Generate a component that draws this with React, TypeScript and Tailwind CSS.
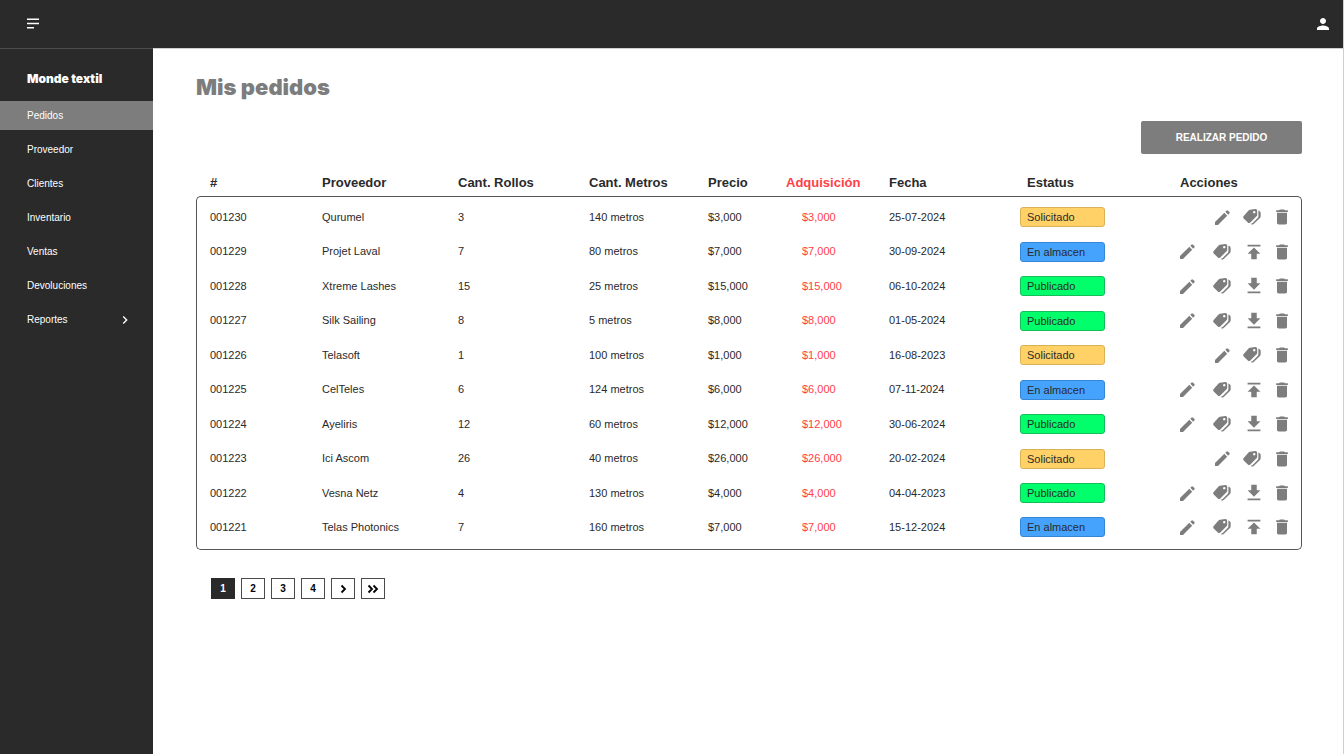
import React from "react";
import { MdChevronRight, MdDelete, MdGetApp, MdPerson, MdPublish } from "react-icons/md";

type Status = "Solicitado" | "En almacen" | "Publicado";

interface Order {
  id: string;
  supplier: string;
  rolls: number;
  meters: number;
  price: string;
  date: string;
  status: Status;
}

const orders: Order[] = [
  { id: "001230", supplier: "Qurumel", rolls: 3, meters: 140, price: "$3,000", date: "25-07-2024", status: "Solicitado" },
  { id: "001229", supplier: "Projet Laval", rolls: 7, meters: 80, price: "$7,000", date: "30-09-2024", status: "En almacen" },
  { id: "001228", supplier: "Xtreme Lashes", rolls: 15, meters: 25, price: "$15,000", date: "06-10-2024", status: "Publicado" },
  { id: "001227", supplier: "Silk Sailing", rolls: 8, meters: 5, price: "$8,000", date: "01-05-2024", status: "Publicado" },
  { id: "001226", supplier: "Telasoft", rolls: 1, meters: 100, price: "$1,000", date: "16-08-2023", status: "Solicitado" },
  { id: "001225", supplier: "CelTeles", rolls: 6, meters: 124, price: "$6,000", date: "07-11-2024", status: "En almacen" },
  { id: "001224", supplier: "Ayeliris", rolls: 12, meters: 60, price: "$12,000", date: "30-06-2024", status: "Publicado" },
  { id: "001223", supplier: "Ici Ascom", rolls: 26, meters: 40, price: "$26,000", date: "20-02-2024", status: "Solicitado" },
  { id: "001222", supplier: "Vesna Netz", rolls: 4, meters: 130, price: "$4,000", date: "04-04-2023", status: "Publicado" },
  { id: "001221", supplier: "Telas Photonics", rolls: 7, meters: 160, price: "$7,000", date: "15-12-2024", status: "En almacen" },
];

const statusStyle: Record<Status, string> = {
  Solicitado: "bg-[#ffd166] border-[#d9b257]",
  "En almacen": "bg-[#45a3fe] border-[#3587d6]",
  Publicado: "bg-[#00ff6a] border-[#14bf5b]",
};

const navItems = ["Pedidos", "Proveedor", "Clientes", "Inventario", "Ventas", "Devoluciones", "Reportes"];

const iconButton = "flex size-5 items-center justify-center text-[#7d7d7d]";

function PencilIcon() {
  return (
    <svg width="15" height="15" viewBox="0 0 45 45" fill="currentColor">
      <path d="M0 45V36L28 8.500 36.500 17 9 45Z" />
      <path d="M31 5.500 35 1.500Q37 0 39 2L43.500 6Q45 8 43.500 10L39.500 14Z" />
    </svg>
  );
}

function TagsIcon() {
  return (
    <svg width="18" height="16" viewBox="0 0 52 46" fill="currentColor">
      <path
        fillRule="evenodd"
        d="M20 2 36 0Q41 0 41 5V17Q41 19 39 21L21 39Q17 42 14 39L2 27Q-1 23 2 20L16 4Q18 2 20 2ZM32.500 5.500a3.500 3.500 0 1 0 0 7 3.500 3.500 0 0 0 0-7Z"
      />
      <path d="M44.500 4Q51 6 51 11V21Q51 24 49 26L31 43Q27 46 24 44L22 42.500Q26 42 28 40L43 25Q44.500 23 44.500 21Z" />
    </svg>
  );
}

function Actions({ status }: { status: Status }) {
  const columns = status === "Solicitado" ? "grid-cols-[30px_30px_20px]" : "grid-cols-[35px_32px_28px_20px]";
  return (
    <div className={`grid justify-end ${columns}`}>
      <button className={iconButton} aria-label="Editar">
        <PencilIcon />
      </button>
      <button className={iconButton} aria-label="Etiquetas">
        <TagsIcon />
      </button>
      {status === "En almacen" && (
        <button className={iconButton} aria-label="Publicar">
          <MdPublish size={22} className="shrink-0" />
        </button>
      )}
      {status === "Publicado" && (
        <button className={iconButton} aria-label="Descargar">
          <MdGetApp size={22} className="shrink-0" />
        </button>
      )}
      <button className={iconButton} aria-label="Eliminar">
        <MdDelete size={20} />
      </button>
    </div>
  );
}

const pageButton = "flex h-[21px] w-6 items-center justify-center border border-[#4a4a4a] text-[10px] font-bold";

export default function App() {
  return (
    <div className="flex min-h-screen flex-col border-r border-[#cfcfcf] bg-white font-['Liberation_Sans',Arial,sans-serif] text-[#2a2a2a]">
      <header className="flex h-12 items-center justify-between bg-[#2a2a2a] pr-[11px] pb-px pl-[27px] text-white">
        <button aria-label="Menú">
          <svg width="12" height="12" viewBox="0 0 12 12" fill="currentColor">
            <rect x="0" y="0.500" width="12" height="1.500" />
            <rect x="0" y="4.750" width="12" height="1.500" />
            <rect x="0" y="9" width="7" height="1.500" />
          </svg>
        </button>
        <button aria-label="Cuenta">
          <MdPerson size={18} />
        </button>
      </header>

      <div className="flex grow">
        <aside className="w-[153px] shrink-0 border-t border-[#4d4d4d] bg-[#2a2a2a] text-white">
          <div className="px-[27px] pt-[22px] pb-[14px] font-['Inter',sans-serif] text-[12px] leading-4 font-black">Monde textil</div>
          <nav className="flex flex-col gap-[5px] text-[10px]">
            {navItems.map((item) => (
              <a
                key={item}
                href={`#${item.toLowerCase()}`}
                aria-current={item === "Pedidos" ? "page" : undefined}
                className={`flex h-[29px] items-center justify-between pr-5 pl-[27px] ${item === "Pedidos" ? "bg-[#7d7d7d]" : ""}`}
              >
                {item}
                {item === "Reportes" && <MdChevronRight size={16} />}
              </a>
            ))}
          </nav>
        </aside>

        <main className="min-w-0 grow border-t border-[#cfcfcf] pr-[41px] pl-[43px]">
          <h1 className="pt-6 font-['Inter',sans-serif] text-[22px] leading-7 font-black text-[#7d7d7d]">Mis pedidos</h1>
          <div className="mt-5 flex justify-end">
            <button className="h-[33px] w-[161px] rounded-xs bg-[#7d7d7d] text-[10px] font-bold text-white">REALIZAR PEDIDO</button>
          </div>

          <table className="mt-4 w-full table-fixed border-separate border-spacing-0 text-left text-[11px]">
            <colgroup>
              <col className="w-[112px]" />
              <col className="w-[136px]" />
              <col className="w-[131px]" />
              <col className="w-[119px]" />
              <col className="w-[78px]" />
              <col className="w-[103px]" />
              <col className="w-[131px]" />
              <col className="w-[160px]" />
              <col className="w-[136px]" />
            </colgroup>
            <thead>
              <tr className="h-[26px] text-[13px] [&>th]:pl-[14px]">
                <th>#</th>
                <th>Proveedor</th>
                <th>Cant. Rollos</th>
                <th>Cant. Metros</th>
                <th>Precio</th>
                <th className="text-[#ff4046]">Adquisición</th>
                <th>Fecha</th>
                <th>
                  <span className="pl-[7px]">Estatus</span>
                </th>
                <th>Acciones</th>
              </tr>
            </thead>
            <tbody className="[&_td]:border-[#555555] [&_td]:pl-[14px] [&_td:first-child]:border-l [&_td:first-child]:pl-[13px] [&_td:last-child]:border-r [&>tr:first-child>td]:border-t [&>tr:first-child>td]:pt-[3px] [&>tr:first-child>td:first-child]:rounded-tl-[5px] [&>tr:first-child>td:last-child]:rounded-tr-[5px] [&>tr:last-child>td]:border-b [&>tr:last-child>td]:pb-[5px] [&>tr:last-child>td:first-child]:rounded-bl-[5px] [&>tr:last-child>td:last-child]:rounded-br-[5px]">
              {orders.map((order) => (
                <tr key={order.id} className="h-[34px] first:h-[38px] nth-[2n]:h-[35px] last:h-10!">
                  <td>{order.id}</td>
                  <td>{order.supplier}</td>
                  <td>{order.rolls}</td>
                  <td>{order.meters} metros</td>
                  <td>{order.price}</td>
                  <td className="text-[#ff4046]">
                    <span className="pl-4">{order.price}</span>
                  </td>
                  <td>{order.date}</td>
                  <td>
                    <div className={`flex h-5 w-[85px] items-center rounded-[3px] border pt-px pl-[6px] ${statusStyle[order.status]}`}>{order.status}</div>
                  </td>
                  <td className="pr-[9px]">
                    <Actions status={order.status} />
                  </td>
                </tr>
              ))}
            </tbody>
          </table>

          <nav aria-label="Paginación" className="mt-7 flex gap-[6px] pl-[15px] text-black">
            <button aria-current="page" className="flex h-[21px] w-6 items-center justify-center border border-[#2a2a2a] bg-[#2a2a2a] text-[10px] font-bold text-white">
              1
            </button>
            <button className={pageButton}>2</button>
            <button className={pageButton}>3</button>
            <button className={pageButton}>4</button>
            <button className={pageButton} aria-label="Siguiente">
              <svg width="12" height="10" viewBox="0 0 12 10" fill="none" stroke="currentColor" strokeWidth="1.8">
                <path d="M4.500 1.500 8 5 4.500 8.500" />
              </svg>
            </button>
            <button className={pageButton} aria-label="Última">
              <svg width="12" height="10" viewBox="0 0 12 10" fill="none" stroke="currentColor" strokeWidth="1.8">
                <path d="M1.500 1.500 5 5 1.500 8.500M6.500 1.500 10 5 6.500 8.500" />
              </svg>
            </button>
          </nav>
        </main>
      </div>
    </div>
  );
}
